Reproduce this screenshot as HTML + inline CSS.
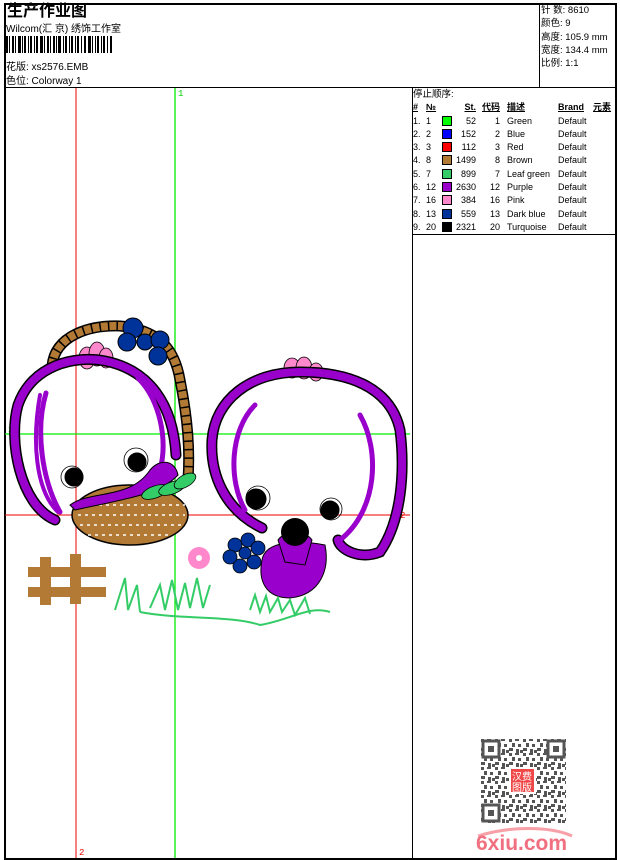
<!DOCTYPE html>
<html><head><meta charset="utf-8"><style>
body{margin:0;width:620px;height:860px;background:#fff;position:relative;overflow:hidden;font-family:"Liberation Sans","Noto Sans CJK SC",sans-serif;color:#000}
.a{position:absolute;white-space:nowrap;font-size:10px;line-height:12px}
.ln{position:absolute;background:#000}
.r{position:absolute;left:0;width:620px;height:13px;font-size:9px;line-height:13px}
.r span{position:absolute;white-space:nowrap}
.c1{left:413px}.c2{left:426px}.c4{right:144px;text-align:right}.c5{right:120px;text-align:right}.c6{left:507px}.c7{left:558px}.c8{left:593px}
.sw{left:442px;top:1px;width:10px;height:10px;border:1px solid #000;box-sizing:border-box}
.h span{font-weight:bold;text-decoration:underline}
</style></head><body>
<div class="ln" style="left:4px;top:3px;width:612px;height:2px"></div>
<div class="ln" style="left:4px;top:3px;width:2px;height:857px"></div>
<div class="ln" style="left:615px;top:3px;width:2px;height:857px"></div>
<div class="ln" style="left:4px;top:858px;width:613px;height:2px"></div>
<div class="ln" style="left:4px;top:87px;width:612px;height:1px"></div>
<div class="ln" style="left:539px;top:4px;width:1px;height:84px"></div>
<div class="ln" style="left:412px;top:88px;width:1px;height:771px"></div>
<div class="ln" style="left:412px;top:234px;width:204px;height:1px"></div>

<div class="a" style="left:7px;top:3px;font-size:16px;line-height:18px;font-weight:bold">生产作业图</div>
<div class="a" style="left:6px;top:24px">Wilcom(汇 京) 绣饰工作室</div>
<svg style="position:absolute;left:6px;top:36px" width="106" height="17">
<g fill="#000">
<rect x="0" y="0" width="2" height="17"/><rect x="3" y="0" width="1" height="17"/><rect x="6" y="0" width="2" height="17"/><rect x="9" y="0" width="1" height="17"/><rect x="12" y="0" width="3" height="17"/><rect x="16" y="0" width="1" height="17"/><rect x="18" y="0" width="2" height="17"/><rect x="22" y="0" width="1" height="17"/><rect x="24" y="0" width="2" height="17"/><rect x="28" y="0" width="1" height="17"/><rect x="30" y="0" width="2" height="17"/><rect x="34" y="0" width="3" height="17"/><rect x="38" y="0" width="1" height="17"/><rect x="41" y="0" width="2" height="17"/><rect x="44" y="0" width="1" height="17"/><rect x="47" y="0" width="2" height="17"/><rect x="50" y="0" width="1" height="17"/><rect x="52" y="0" width="3" height="17"/><rect x="57" y="0" width="1" height="17"/><rect x="59" y="0" width="2" height="17"/><rect x="63" y="0" width="1" height="17"/><rect x="65" y="0" width="2" height="17"/><rect x="69" y="0" width="1" height="17"/><rect x="71" y="0" width="2" height="17"/><rect x="75" y="0" width="1" height="17"/><rect x="78" y="0" width="2" height="17"/><rect x="82" y="0" width="3" height="17"/><rect x="86" y="0" width="1" height="17"/><rect x="89" y="0" width="1" height="17"/><rect x="91" y="0" width="2" height="17"/><rect x="95" y="0" width="1" height="17"/><rect x="97" y="0" width="2" height="17"/><rect x="101" y="0" width="1" height="17"/><rect x="104" y="0" width="2" height="17"/>
</g></svg>
<div class="a" style="left:6px;top:62px">花版: xs2576.EMB</div>
<div class="a" style="left:6px;top:76px">色位: Colorway 1</div>

<div class="a" style="left:541px;top:5px;font-size:9.5px">针 数: 8610</div>
<div class="a" style="left:541px;top:18px;font-size:9.5px">颜色: 9</div>
<div class="a" style="left:541px;top:32px;font-size:9.5px">高度: 105.9 mm</div>
<div class="a" style="left:541px;top:45px;font-size:9.5px">宽度: 134.4 mm</div>
<div class="a" style="left:541px;top:58px;font-size:9.5px">比例: 1:1</div>

<div class="a" style="left:413px;top:89px;font-size:9.5px">停止顺序:</div>
<div class="r h" style="top:101px"><span class="c1">#</span><span class="c2">№</span><span class="c4">St.</span><span class="c5">代码</span><span class="c6">描述</span><span class="c7">Brand</span><span class="c8">元素</span></div>
<div class="r" style="top:115px"><span class="c1">1.</span><span class="c2">1</span><span class="sw" style="background:#00ff00"></span><span class="c4">52</span><span class="c5">1</span><span class="c6">Green</span><span class="c7">Default</span></div>
<div class="r" style="top:128px"><span class="c1">2.</span><span class="c2">2</span><span class="sw" style="background:#0000ff"></span><span class="c4">152</span><span class="c5">2</span><span class="c6">Blue</span><span class="c7">Default</span></div>
<div class="r" style="top:141px"><span class="c1">3.</span><span class="c2">3</span><span class="sw" style="background:#ff0000"></span><span class="c4">112</span><span class="c5">3</span><span class="c6">Red</span><span class="c7">Default</span></div>
<div class="r" style="top:154px"><span class="c1">4.</span><span class="c2">8</span><span class="sw" style="background:#b37a35"></span><span class="c4">1499</span><span class="c5">8</span><span class="c6">Brown</span><span class="c7">Default</span></div>
<div class="r" style="top:168px"><span class="c1">5.</span><span class="c2">7</span><span class="sw" style="background:#33cc66"></span><span class="c4">899</span><span class="c5">7</span><span class="c6">Leaf green</span><span class="c7">Default</span></div>
<div class="r" style="top:181px"><span class="c1">6.</span><span class="c2">12</span><span class="sw" style="background:#9900cc"></span><span class="c4">2630</span><span class="c5">12</span><span class="c6">Purple</span><span class="c7">Default</span></div>
<div class="r" style="top:194px"><span class="c1">7.</span><span class="c2">16</span><span class="sw" style="background:#ff88cc"></span><span class="c4">384</span><span class="c5">16</span><span class="c6">Pink</span><span class="c7">Default</span></div>
<div class="r" style="top:208px"><span class="c1">8.</span><span class="c2">13</span><span class="sw" style="background:#003399"></span><span class="c4">559</span><span class="c5">13</span><span class="c6">Dark blue</span><span class="c7">Default</span></div>
<div class="r" style="top:221px"><span class="c1">9.</span><span class="c2">20</span><span class="sw" style="background:#000"></span><span class="c4">2321</span><span class="c5">20</span><span class="c6">Turquoise</span><span class="c7">Default</span></div>

<svg style="position:absolute;left:0;top:0" width="620" height="860">
<line x1="76" y1="88" x2="76" y2="858" stroke="#e00" stroke-width="1"/>
<line x1="175" y1="88" x2="175" y2="858" stroke="#0e0" stroke-width="1.3"/>
<line x1="5" y1="434" x2="410" y2="434" stroke="#0e0" stroke-width="1.3"/>
<line x1="5" y1="515" x2="410" y2="515" stroke="#e00" stroke-width="1"/>
<text x="178" y="96" font-size="9" fill="#0c0" font-family="Liberation Mono">1</text>
<text x="79" y="855" font-size="9" fill="#e00" font-family="Liberation Mono">2</text>
<text x="8" y="432" font-size="9" fill="#0c0" font-family="Liberation Mono">1</text>
<text x="400" y="518" font-size="9" fill="#e00" font-family="Liberation Mono">2</text>

<path d="M52,366 C55,335 90,325 120,326 C160,330 175,350 180,380 C188,420 190,450 188,480" fill="none" stroke="#000" stroke-width="11"/>
<path d="M52,366 C55,335 90,325 120,326 C160,330 175,350 180,380 C188,420 190,450 188,480" fill="none" stroke="#b37a35" stroke-width="8" stroke-dasharray="7,1.5"/>
<g fill="#003399" stroke="#000" stroke-width="1"><circle cx="133" cy="328" r="10"/><circle cx="127" cy="342" r="9"/><circle cx="145" cy="342" r="8"/><circle cx="160" cy="340" r="9"/><circle cx="158" cy="356" r="9"/></g>
<g fill="#ff88cc" stroke="#000" stroke-width="0.8"><ellipse cx="87" cy="358" rx="8" ry="11"/><ellipse cx="97" cy="354" rx="8" ry="12"/><ellipse cx="106" cy="358" rx="7" ry="10"/>
<ellipse cx="292" cy="368" rx="8" ry="10"/><ellipse cx="304" cy="368" rx="8" ry="11"/><ellipse cx="316" cy="372" rx="7" ry="9"/></g>
<g fill="none" stroke-linecap="round">
<path d="M55,520 C20,505 8,440 18,405 C32,365 75,355 105,361 C150,370 173,405 176,455" stroke="#000" stroke-width="11"/>
<path d="M55,520 C20,505 8,440 18,405 C32,365 75,355 105,361 C150,370 173,405 176,455" stroke="#9900cc" stroke-width="8"/>
<path d="M60,512 C42,480 35,430 46,393" stroke="#9900cc" stroke-width="5"/>
<path d="M40,395 C32,440 35,490 58,512" stroke="#9900cc" stroke-width="4"/>
<path d="M138,378 C160,400 168,440 160,470" stroke="#9900cc" stroke-width="5"/>
<path d="M262,528 C225,510 210,475 212,440 C215,400 250,372 300,372 C345,372 390,385 400,430 C405,470 402,520 380,552 C360,560 340,550 338,540" stroke="#000" stroke-width="11"/>
<path d="M262,528 C225,510 210,475 212,440 C215,400 250,372 300,372 C345,372 390,385 400,430 C405,470 402,520 380,552 C360,560 340,550 338,540" stroke="#9900cc" stroke-width="8"/>
<path d="M255,405 C230,430 228,480 245,510" stroke="#9900cc" stroke-width="5"/>
<path d="M360,415 C380,450 378,510 340,540" stroke="#9900cc" stroke-width="5"/>
</g>
<ellipse cx="130" cy="515" rx="58" ry="30" fill="#b37a35" stroke="#000" stroke-width="1.5"/>
<g stroke="#fff" stroke-width="1.5" stroke-dasharray="3,4"><line x1="78" y1="505" x2="185" y2="505"/><line x1="78" y1="515" x2="185" y2="515"/><line x1="80" y1="525" x2="182" y2="525"/><line x1="88" y1="535" x2="170" y2="535"/></g>
<path d="M70,505 C90,490 130,500 150,470 C160,458 175,460 178,475 C160,495 120,500 75,510Z" fill="#9900cc" stroke="#000"/>
<g fill="#33cc66" stroke="#000" stroke-width="0.8"><ellipse cx="155" cy="492" rx="14" ry="6" transform="rotate(-20 155 492)"/><ellipse cx="172" cy="488" rx="14" ry="6" transform="rotate(-20 172 488)"/><ellipse cx="185" cy="481" rx="12" ry="6" transform="rotate(-30 185 481)"/></g>
<g fill="#000" stroke="#000"><circle cx="74" cy="477" r="9"/><circle cx="137" cy="462" r="9"/><circle cx="256" cy="499" r="10"/><circle cx="330" cy="510" r="9"/></g>
<g fill="none" stroke="#000" stroke-width="0.8"><circle cx="72" cy="477" r="11"/><circle cx="136" cy="460" r="12"/><circle cx="258" cy="498" r="12"/><circle cx="331" cy="509" r="11"/></g>
<path d="M262,560 C265,540 300,540 325,545 C330,570 320,595 290,598 C265,598 258,580 262,560Z" fill="#9900cc" stroke="#000"/>
<path d="M278,540 C285,530 305,530 312,540 L305,565 L285,562Z" fill="#9900cc" stroke="#000"/>
<circle cx="295" cy="532" r="14" fill="#000"/>
<g fill="#003399" stroke="#000" stroke-width="0.8"><circle cx="235" cy="545" r="7"/><circle cx="248" cy="540" r="7"/><circle cx="258" cy="548" r="7"/><circle cx="254" cy="562" r="7"/><circle cx="240" cy="566" r="7"/><circle cx="230" cy="557" r="7"/><circle cx="245" cy="553" r="6"/></g>
<circle cx="199" cy="558" r="11" fill="#ff88cc"/><circle cx="199" cy="558" r="3" fill="#fff"/>
<g stroke="#33cc66" stroke-width="2" fill="none">
<path d="M115,610 L125,578 L128,610 L137,585 L140,612"/><path d="M150,608 L160,585 L165,610 L172,580 L178,610 L185,583 L190,608 L197,578 L203,608 L210,585"/>
<path d="M140,612 C180,620 230,615 260,625 C290,620 310,605 330,612"/>
<path d="M250,610 L255,595 L260,612 L266,596 L270,612 L278,598 L282,612 L290,600 L295,615 L305,598 L310,614"/>
</g>
<g fill="#b37a35"><rect x="40" y="557" width="11" height="48"/><rect x="70" y="554" width="11" height="50"/><rect x="28" y="567" width="78" height="10"/><rect x="28" y="587" width="78" height="10"/></g>

<defs><pattern id="q" width="14" height="14" patternUnits="userSpaceOnUse" x="481" y="739">
<rect width="14" height="14" fill="#fff"/><g fill="#555"><rect x="0" y="0" width="3" height="3"/><rect x="6" y="0" width="4" height="2"/><rect x="3" y="4" width="3" height="4"/><rect x="9" y="5" width="3" height="3"/><rect x="0" y="9" width="4" height="3"/><rect x="7" y="10" width="3" height="4"/><rect x="11" y="11" width="3" height="3"/></g></pattern></defs>
<rect x="481" y="739" width="85" height="84" fill="url(#q)"/>
<g fill="#fff" stroke="#555" stroke-width="3"><rect x="483" y="741" width="16" height="16"/><rect x="548" y="741" width="16" height="16"/><rect x="483" y="805" width="16" height="16"/></g>
<g fill="#555"><rect x="488" y="746" width="6" height="6"/><rect x="553" y="746" width="6" height="6"/><rect x="488" y="810" width="6" height="6"/></g>
<rect x="510" y="768" width="25" height="25" fill="#f04848" stroke="#fff" stroke-width="2"/>
<text x="512" y="780" font-size="10" fill="#fff" font-family="Noto Sans CJK SC">汉费</text>
<text x="512" y="791" font-size="10" fill="#fff" font-family="Noto Sans CJK SC">图版</text>
<path d="M478,836 C510,826 550,826 572,836" stroke="#f8a0a8" stroke-width="3" fill="none"/>
<text x="476" y="850" font-size="21" font-weight="bold" fill="#f07080" font-family="Liberation Sans">6xiu.com</text>
</svg>
</body></html>
